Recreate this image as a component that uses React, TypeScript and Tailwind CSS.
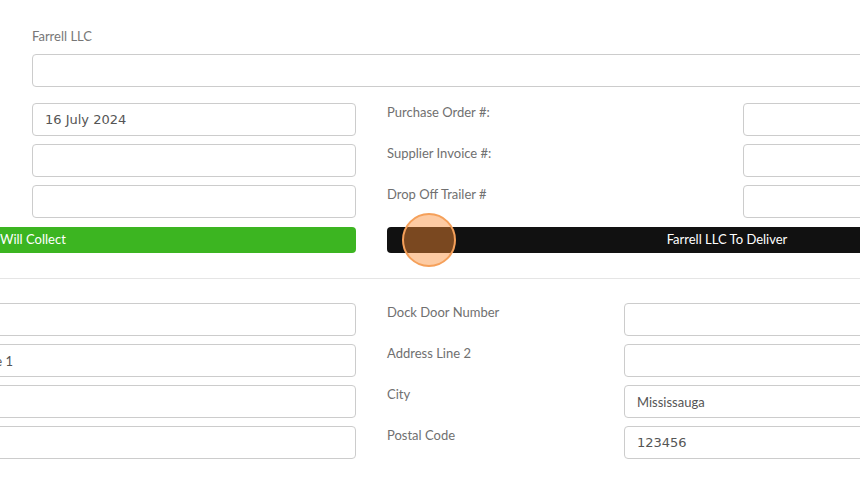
import React from "react";

const field =
  "h-[33px] rounded-[4px] border border-[#cccccc] bg-white px-[12px] text-[13px] text-[#555] outline-none";
const sans = "font-['Lato','Open_Sans',sans-serif]";
const mono = "font-['DejaVu_Sans',sans-serif]";

function Field({ value = "", wide, className = "", valueFont = sans }: { value?: string; wide?: boolean; className?: string; valueFont?: string }) {
  return (
    <input
      readOnly
      defaultValue={value}
      className={`${field} ${valueFont} ${wide ? "w-[600px]" : "w-full"} ${className}`}
    />
  );
}

export default function App() {
  const topRows = [
    { value: "16 July 2024", label: "Purchase Order #:" },
    { value: "", label: "Supplier Invoice #:" },
    { value: "", label: "Drop Off Trailer #" },
  ];
  const bottomRows = [
    { left: "", label: "Dock Door Number", right: "", font: sans },
    { left: "Address Line 1", label: "Address Line 2", right: "", font: sans },
    { left: "", label: "City", right: "Mississauga", font: sans },
    { left: "", label: "Postal Code", right: "123456", font: mono },
  ];

  return (
    <div className={`relative h-[481px] w-[860px] overflow-hidden bg-white ${sans}`}>
      {/* supplier header */}
      <div className="pl-8 pt-[27px] text-[13px] leading-[18px] text-[#777]">Farrell LLC</div>
      <div className="mt-[9px] pl-8">
        <input readOnly className={`${field} w-[900px]`} />
      </div>

      {/* order details */}
      <div className="mt-[16px] flex flex-col gap-2">
        {topRows.map((r) => (
          <div key={r.label} className="flex">
            <div className="ml-8 w-[324px] shrink-0">
              <Field value={r.value} valueFont={mono} />
            </div>
            <div className="ml-[31px] w-[356px] shrink-0 text-[13px] leading-[18px] text-[#707070]">{r.label}</div>
            <Field wide className="shrink-0" />
          </div>
        ))}
      </div>

      {/* delivery choice */}
      <div className="mt-[9px] flex">
        <div className="ml-[-300px] flex h-[26px] w-[656px] shrink-0 items-center rounded-[4px] bg-[#3cb521] pl-[300px] text-[13px] text-white">
          Will Collect
        </div>
        <div className="ml-[31px] flex h-[26px] w-[680px] shrink-0 items-center justify-center rounded-[4px] bg-[#111111] text-[13px] text-white">
          Farrell LLC To Deliver
        </div>
      </div>

      <div className="mt-[25px] border-t border-[#e5e5e5]" />

      {/* address */}
      <div className="mt-[24px] flex flex-col gap-2">
        {bottomRows.map((r) => (
          <div key={r.label} className="flex">
            <div className="ml-[-84px] w-[440px] shrink-0">
              <Field value={r.left} />
            </div>
            <div className="ml-[31px] w-[237px] shrink-0 text-[13px] leading-[18px] text-[#707070]">{r.label}</div>
            <Field wide value={r.right} valueFont={r.font} className="shrink-0" />
          </div>
        ))}
      </div>

      {/* click marker */}
      <div className="pointer-events-none absolute left-[402px] top-[213px] h-[54px] w-[54px] rounded-full border-2 border-[#f5a05a] bg-[rgba(250,140,50,0.45)]" />
    </div>
  );
}
